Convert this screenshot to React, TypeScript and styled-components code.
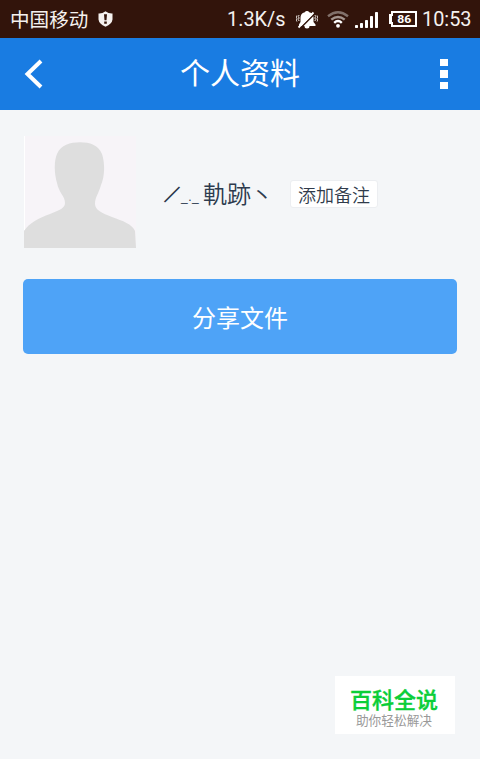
import React from 'react';
import styled, { createGlobalStyle } from 'styled-components';

const Global = createGlobalStyle`
  * { box-sizing: border-box; }
  body { margin: 0; background: #f4f6f8; font-family: "Noto Sans CJK SC", sans-serif; -webkit-font-smoothing: antialiased; }
`;
const Screen = styled.main`
  width: 480px; height: 759px; display: flex; flex-direction: column;
  background: #f4f6f8; overflow: hidden;
`;
const StatusBar = styled.header`
  height: 38px; flex: none; display: flex; align-items: center; justify-content: space-between;
  padding: 0 9px 0 10px; background: #32140b; color: #f5f1ef;
`;
const StatusGroup = styled.div`display: flex; align-items: center; height: 38px;`;
const Carrier = styled.span`font-size: 19.6px; line-height: 38px; margin-right: 10px; font-weight: 400;`;
const StatusText = styled.span<{ $width: number }>`
  width: ${p => p.$width}px; font: 19.9px/38px Roboto, sans-serif; white-space: nowrap; padding-top: 2px;
`;
const StatusIcon = styled.svg<{ $gap: number }>`
  display: block; flex: none; margin-right: ${p => p.$gap}px;
`;
const TitleBar = styled.nav`
  height: 72px; flex: none; display: grid; grid-template-columns: 60px 1fr 60px;
  align-items: center; background: #197ce2; color: #fff;
`;
const Title = styled.h1`
  margin: 0; font-size: 30px; line-height: 66px; height: 72px; font-weight: 400; text-align: center;
`;
const BarButton = styled.button<{ $end?: boolean }>`
  border: 0; padding: 0 ${p => (p.$end ? 32 : 0)}px 0 ${p => (p.$end ? 0 : 24)}px;
  background: none; height: 72px; display: flex; align-items: center;
  justify-content: ${p => (p.$end ? 'flex-end' : 'flex-start')}; color: #fff;
`;
const Body = styled.div`flex: 1; display: flex; flex-direction: column; padding: 26px 23px 25px;`;
const Profile = styled.section`display: flex; align-items: center; height: 112px;`;
const Avatar = styled.svg`display: block; margin-left: 1px; flex: none;`;
const Name = styled.div`
  display: flex; align-items: center; width: 126px; height: 36px; margin: 1px 0 0 28px;
  color: #2d3b4e; font-size: 24px; line-height: 36px; font-weight: 350; white-space: nowrap;
`;
const Slash = styled.span`
  width: 17px; font-size: 16px; line-height: 36px; -webkit-text-stroke: .8px #2d3b4e;
`;
const Dashes = styled.span`width: 22px; font: 12px/36px "Liberation Sans", sans-serif; padding-top: 8px; letter-spacing: .5px;`;
const Dot = styled.span`width: 24px; font-size: 22px; font-weight: 350;`;
const NoteButton = styled.button`
  width: 88px; height: 28px; margin: 4px 0 0 0; padding: 0; border: 1px solid #eceef1; border-radius: 3px;
  background: #fff; color: #303b4b; font: 350 18px/26px "Noto Sans CJK SC", sans-serif;
`;
const ShareButton = styled.button`
  width: 434px; height: 75px; margin-top: 31px; padding: 0; border: 0; border-radius: 5px;
  background: #4ea3f7; color: #fff; font: 400 24px/75px "Noto Sans CJK SC", sans-serif;
`;
const Brand = styled.aside`
  width: 120px; height: 58px; margin: auto 2px 0 auto; padding: 9px 0 0; background: #fff;
  display: flex; flex-direction: column; align-items: center;
`;
const BrandName = styled.strong`
  color: #0bce38; font-size: 22px; line-height: 27px; font-weight: 500; padding-right: 2px;
  -webkit-text-stroke: .35px #0bce38;
`;
const Slogan = styled.span`color: #999; font-size: 12.7px; line-height: 16px; padding-right: 2px;`;

export default function App() {
  return (
    <>
      <Global />
      <Screen>
        <StatusBar>
          <StatusGroup>
            <Carrier>中国移动</Carrier>
            <StatusIcon $gap={0} width="15" height="16" viewBox="0 0 15 16">
              <path d="M.5 2.6 Q4.5 2.8 7.5.3 Q10.5 2.8 14.5 2.6 V8.5 Q14 13 7.5 15.7 Q1 13 .5 8.5Z" fill="#f5f1ef" />
              <path d="M6 3.2h3l-.5 6H6.5zM6.2 10.4h2.6v2.3H6.2z" fill="#32140b" />
            </StatusIcon>
          </StatusGroup>
          <StatusGroup>
            <StatusText $width={69}>1.3K/s</StatusText>
            <StatusIcon $gap={9} width="22" height="19" viewBox="0 0 22 19">
              <path d="M11 1a2.4 2.4 0 0 1 2.2 1.2C16.5 3 17.5 5 17.5 8v4l2 2.4V16H3v-1.6L4.5 12V8c0-3 1.2-5 4.3-5.8A2.4 2.4 0 0 1 11 1zM8.5 16h5a2.5 2.5 0 0 1-5 0z" fill="#fff" />
              <path d="M4 18.5 18.5 4" stroke="#32140b" strokeWidth="1.6" />
              <path d="M2.5 17.5 17.5 2.5" stroke="#fff" strokeWidth="1.8" />
              <path d="M3.2 5l-1 1.5 1 1.5-1 1.5 1 1.5M.9 5.5 0 7l.9 1.5L0 10l.9 1.5M18.8 5l1 1.5-1 1.5 1 1.5-1 1.5M21.1 5.5 22 7l-.9 1.5L22 10l-.9 1.5" fill="none" stroke="#f2edea" strokeWidth="1" />
            </StatusIcon>
            <StatusIcon $gap={6} width="22" height="18" viewBox="0 0 22 18">
              <g fill="none" strokeWidth="2.4">
                <path d="M1 6.3Q11-1.6 21 6.3" stroke="#82716b" />
                <path d="M4.3 9.7Q11 4.1 17.7 9.7" stroke="#a3948e" />
                <path d="M7.2 12.8Q11 9.2 14.8 12.8" stroke="#fff" />
              </g>
              <circle cx="11" cy="15.8" r="1.9" fill="#fff" />
            </StatusIcon>
            <StatusIcon $gap={10} width="24" height="17" viewBox="0 0 24 17">
              <g fill="#fff">
                <rect y="14" width="3" height="3" rx=".7" />
                <rect x="5" y="12" width="3" height="5" rx=".7" />
                <rect x="10" y="9" width="3" height="8" rx=".7" />
                <rect x="15" y="5" width="3" height="12" rx=".7" />
                <rect x="20" y="1" width="3" height="16" rx=".7" />
              </g>
            </StatusIcon>
            <StatusIcon $gap={5} width="28" height="16" viewBox="0 0 28 16">
              <path d="M3 1h24v14H3v-3H1V4h2z" fill="none" stroke="#fff" strokeWidth="2" />
              <path d="M0 4h3v8H0z" fill="#fff" />
              <text x="15.2" y="12.2" textAnchor="middle" textLength="14" lengthAdjust="spacingAndGlyphs" fill="#fff" fontFamily="Roboto, sans-serif" fontSize="11.5" fontWeight="700">86</text>
            </StatusIcon>
            <StatusText $width={49}>10:53</StatusText>
          </StatusGroup>
        </StatusBar>
        <TitleBar>
          <BarButton aria-label="返回">
            <svg width="20" height="30" viewBox="0 0 20 30">
              <path d="M17 2 3.5 15 17 28" fill="none" stroke="currentColor" strokeWidth="4" />
            </svg>
          </BarButton>
          <Title>个人资料</Title>
          <BarButton $end aria-label="更多">
            <svg width="8" height="30" viewBox="0 0 8 30">
              <path d="M0 0h8v7H0zM0 11h8v8H0zM0 23h8v7H0z" fill="currentColor" />
            </svg>
          </BarButton>
        </TitleBar>
        <Body>
          <Profile>
            <Avatar width="112" height="112" viewBox="0 0 112 112">
              <path d="M0 0h112v112H0z" fill="#f7f4f8" />
              <path d="M0 112V95C5 87 15 82 26 78C36 74 41 72 41 67C41 60 35 57 33 47C30 37 30 25 33 18C37 9 46 6.3 56 6.3C66 6.3 74 9 78 18C81 27 81 40 77 49C75 57 71 61 71 68C71 74 78 77 88 81C99 85 108 88 111 95L112 112Z" fill="#dedede" />
              <path d="M.5 0v94" stroke="#fff" />
            </Avatar>
            <Name><Slash>／</Slash><Dashes>_._</Dashes>軌跡<Dot>丶</Dot></Name>
            <NoteButton>添加备注</NoteButton>
          </Profile>
          <ShareButton>分享文件</ShareButton>
          <Brand><BrandName>百科全说</BrandName><Slogan>助你轻松解决</Slogan></Brand>
        </Body>
      </Screen>
    </>
  );
}
